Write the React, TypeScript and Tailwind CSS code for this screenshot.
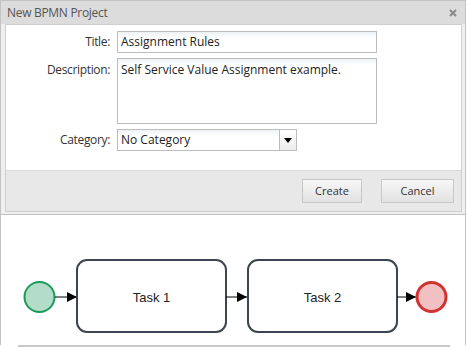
import React from "react";

const font = { fontFamily: '"Open Sans", "Liberation Sans", sans-serif' };

function Diagram() {
  return (
    <svg width="466" height="130" viewBox="0 0 466 130" className="block">
      <defs>
        <marker id="arr" markerWidth="10" markerHeight="10" refX="10" refY="5" orient="auto" markerUnits="userSpaceOnUse">
          <path d="M0,0 L10,5 L0,10 Z" fill="#000" />
        </marker>
      </defs>
      <circle cx="38.5" cy="82" r="15" fill="#b3dcc9" stroke="#1b9a5c" strokeWidth="2" />
      <line x1="54" y1="82" x2="76" y2="82" stroke="#000" strokeWidth="1" markerEnd="url(#arr)" />
      <rect x="76" y="45" width="149" height="72" rx="10" fill="#fff" stroke="#3c4553" strokeWidth="2" />
      <text x="150.5" y="86.5" textAnchor="middle" fontFamily="'Liberation Sans', Arial, sans-serif" fontSize="13" fill="#222">Task 1</text>
      <line x1="225" y1="82" x2="246" y2="82" stroke="#000" strokeWidth="1" markerEnd="url(#arr)" />
      <rect x="247" y="45" width="149" height="72" rx="10" fill="#fff" stroke="#3c4553" strokeWidth="2" />
      <text x="321.5" y="86.5" textAnchor="middle" fontFamily="'Liberation Sans', Arial, sans-serif" fontSize="13" fill="#222">Task 2</text>
      <line x1="396" y1="82" x2="415" y2="82" stroke="#000" strokeWidth="1" markerEnd="url(#arr)" />
      <circle cx="430.5" cy="82" r="14.5" fill="#f0c0c2" stroke="#d23232" strokeWidth="3" />
    </svg>
  );
}

export default function App() {
  return (
    <div className="w-[468px] h-[347px] bg-white overflow-hidden" style={font}>
      {/* Dialog */}
      <div className="w-[466px] h-[215px] border border-[#c3c3c3] bg-[#efefef] flex flex-col">
        <div className="h-[23px] bg-[#dcdcdc] flex items-center justify-between pl-[6px] pr-[8px] shrink-0">
          <span className="text-[12px] text-[#555] tracking-[-0.3px]">New BPMN Project</span>
          <svg width="8" height="8" viewBox="0 0 8 8">
            <path d="M1,1 L7,7 M7,1 L1,7" stroke="#8a8a8a" strokeWidth="2" />
          </svg>
        </div>
        <div className="ml-[4px] mr-[3px] border border-[#cfcfcf] flex flex-col">
          <div className="h-[146px] bg-white border-b border-[#dcdcdc] pt-[6px]">
            <div className="grid grid-cols-[104px_auto] gap-x-[6px] gap-y-[5px] items-start">
              <div className="h-[21px] flex items-center justify-end text-[12px] text-[#333] tracking-[-0.35px]">Title:</div>
              <div className="ml-[1px] w-[260px] h-[22px] border border-[#bdbdbd] bg-gradient-to-b from-[#eef2f5] to-white to-[30%] flex items-center pl-[3px] text-[12px] text-[#222]">
                Assignment Rules
              </div>
              <div className="pt-[3px] flex justify-end text-[12px] text-[#333] leading-[18px] tracking-[-0.35px]">Description:</div>
              <div className="ml-[1px] w-[260px] h-[66px] border border-[#bdbdbd] bg-gradient-to-b from-[#eef2f5] to-white to-[10%] pl-[3px] pt-[2px] text-[12px] text-[#222] leading-[18px]">
                Self Service Value Assignment example.
              </div>
              <div className="h-[22px] flex items-center justify-end text-[12px] text-[#333] tracking-[-0.35px]">Category:</div>
              <div className="ml-[1px] w-[180px] h-[22px] border border-[#bdbdbd] flex">
                <div className="flex-1 bg-gradient-to-b from-[#eef2f5] to-white to-[30%] flex items-center pl-[3px] text-[12px] text-[#222]">
                  No Category
                </div>
                <div className="w-[17px] border-l border-[#bdbdbd] bg-gradient-to-b from-white to-[#ececec] flex items-center justify-center">
                  <svg width="8" height="5" viewBox="0 0 8 5">
                    <path d="M0,0 L8,0 L4,5 Z" fill="#000" />
                  </svg>
                </div>
              </div>
            </div>
          </div>
          <div className="h-[40px] bg-[#e8e8e8] flex items-start justify-end pt-[8px] pr-[7px] gap-[19px]">
            <button className="w-[60px] h-[24px] border border-[#c8c8c8] bg-gradient-to-b from-[#f7f7f7] to-[#e2e2e2] text-[11px] text-[#333]">
              Create
            </button>
            <button className="w-[73px] h-[24px] border border-[#c8c8c8] bg-gradient-to-b from-[#f7f7f7] to-[#e2e2e2] text-[11px] text-[#333]">
              Cancel
            </button>
          </div>
        </div>
      </div>
      {/* Canvas */}
      <div className="w-[466px] h-[130px] border-l border-r border-[#c3c3c3]">
        <Diagram />
      </div>
      <div className="ml-[18px] w-[432px] h-[2px] bg-[#c8c8c8]" />
    </div>
  );
}
